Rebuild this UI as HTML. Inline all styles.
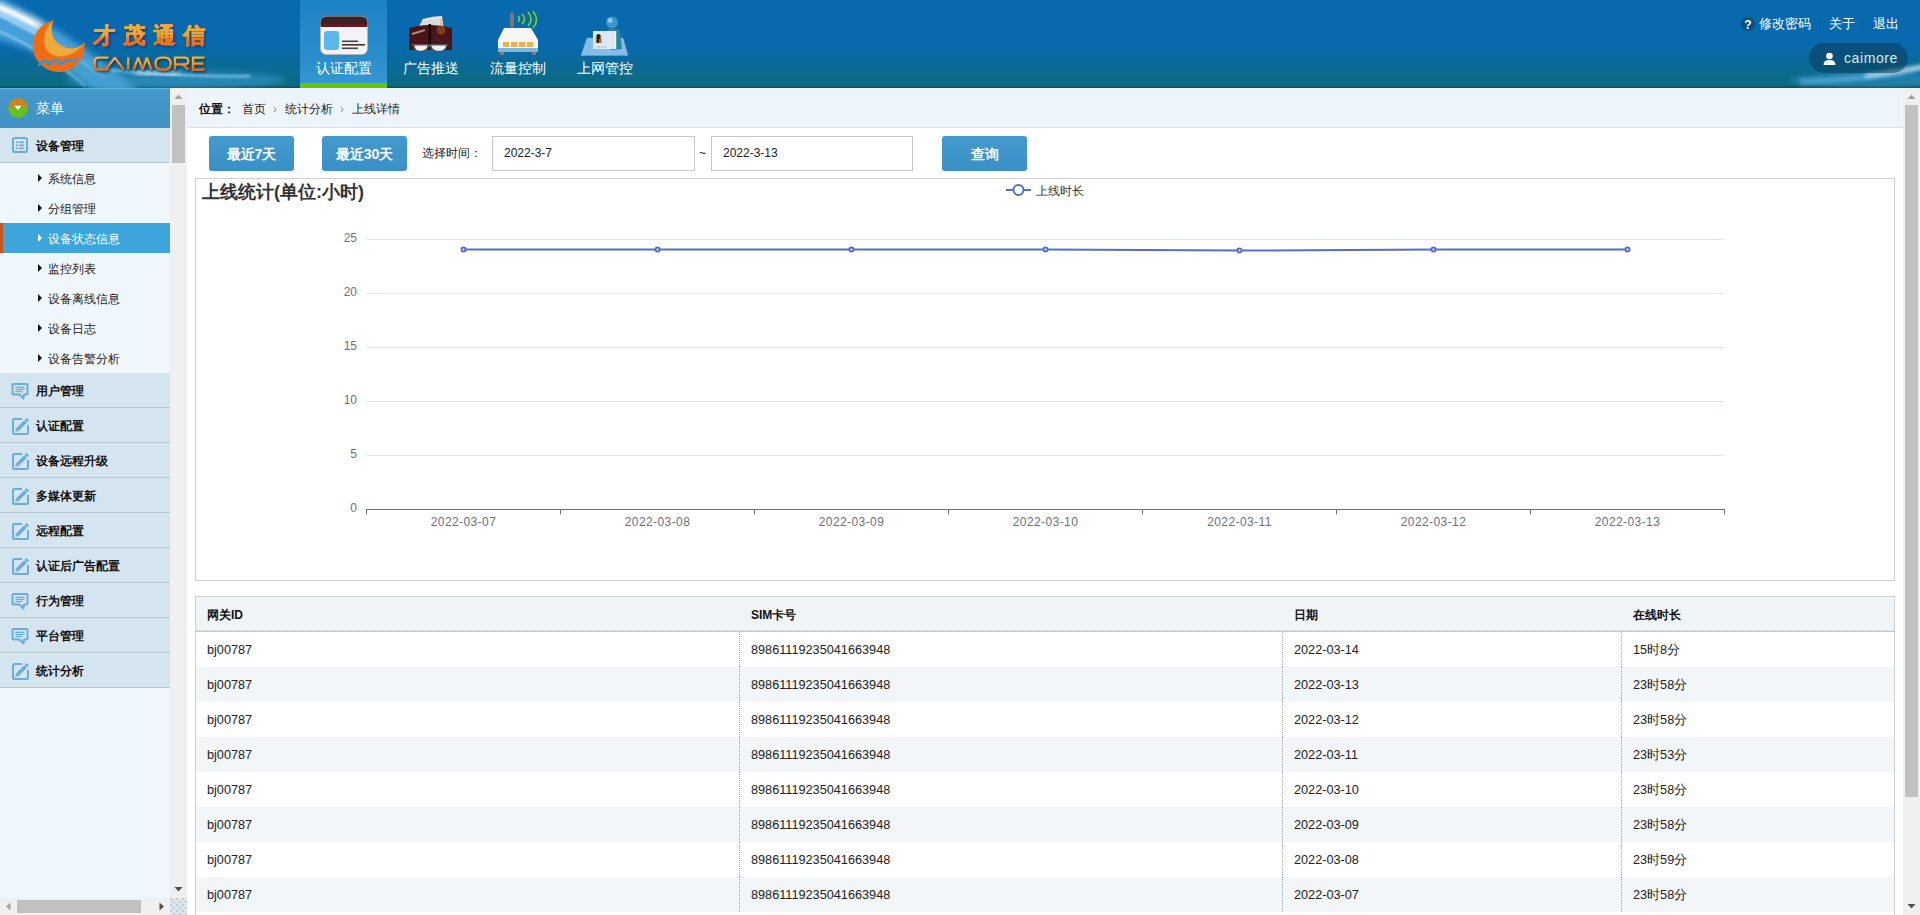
<!DOCTYPE html>
<html><head><meta charset="utf-8">
<style>
*{box-sizing:border-box;margin:0;padding:0}
html,body{width:1920px;height:915px;overflow:hidden;background:#fff;font-family:"Liberation Sans",sans-serif;font-size:12px;color:#222}
.abs{position:absolute}
#hdr{position:absolute;left:0;top:0;width:1920px;height:88px;background:linear-gradient(#0869ae 0,#0869ae 44px,#0a6a9a 62px,#0d6a80 86px,#0a4f66 87px,#0a4f66 88px);overflow:hidden}
.tab{position:absolute;top:0;width:87px;height:88px;text-align:center;color:#fff;font-size:14px}
.tab .lbl{position:absolute;left:0;width:87px;top:59px;line-height:18px}
.tab.act{background:linear-gradient(#1b82c4,#2a8fcc 70%,#3497d0 83px,#5ecc00 83px,#5ecc00 88px)}
#side{position:absolute;left:0;top:88px;width:170px;height:810px;background:#eff7fd;overflow:hidden}
.vsb{position:absolute;background:#f0f0f0}
.menuhd{position:absolute;left:0;top:0;width:170px;height:40px;background:linear-gradient(#56b6e8 0,#56b6e8 1px,#4698cb 1px,#3f91c6);color:#fff;font-size:14px}
.grp{position:absolute;left:0;width:170px;height:35px;background:#d5e5ef;border-bottom:1px solid #b5c9d6;font-weight:bold;color:#111}
.ico{position:absolute;left:11px;top:8px}
.grp span{position:absolute;left:36px;top:1px;line-height:34px}
.sub{position:absolute;left:0;width:170px;height:30px;color:#222}
.sub span{position:absolute;left:48px;line-height:30px;top:1px}
.sub i{position:absolute;left:38px;top:11px;width:0;height:0;border-top:4px solid transparent;border-bottom:4px solid transparent;border-left:4px solid #111}
.sub.act{background:#3ea5dc;color:#fff;border-left:3px solid #c9561e}
.sub.act i{border-left-color:#fff;left:35px}
.sub.act span{left:45px}
#main{position:absolute;left:187px;top:88px;width:1716px;height:827px;background:#fff;overflow:hidden}
#crumb{position:absolute;left:0;top:0;width:1716px;height:40px;background:#edf4fb;border-bottom:1px solid #d6e1ea}
.btn{position:absolute;top:48px;height:35px;border-radius:3px;background:linear-gradient(#449acb,#3a90c6);color:#fff;font-weight:bold;font-size:14px;text-align:center;line-height:37px}
.inp{position:absolute;top:48px;height:35px;border:1px solid #c8c8c8;background:#fff;line-height:33px;padding-left:11px;font-size:12px;color:#222}
#chart{position:absolute;left:8px;top:90px;width:1700px;height:403px;border:1px solid #cfcfcf;background:#fff}
#tbl{position:absolute;left:8px;top:508px;width:1700px;height:330px;border:1px solid #cfcfcf;border-bottom:none}
.th{position:absolute;top:0;left:0;width:1698px;height:35px;background:#eff4f7;border-bottom:1px solid #b9cdda;font-weight:bold;color:#111}
.th:after{content:"";position:absolute;left:0;right:0;bottom:0;border-bottom:1px dotted #c6d6e0}
.row{position:absolute;left:0;width:1698px;height:35px}
.row.odd{background:#f2f6f9}
.c{position:absolute;top:1px;line-height:35px;padding-left:11px;height:35px}
.cb{border-left:1px dotted #a8a8a8;padding-left:11px;top:0;line-height:37px}
.row .c{font-size:12.7px;color:#222}
</style></head><body>
<div id="hdr">
  <svg class="abs" style="left:0;top:0" width="420" height="88" viewBox="0 0 420 88">
    <defs>
      <filter id="bl3" x="-20%" y="-50%" width="140%" height="200%"><feGaussianBlur stdDeviation="3"/></filter>
      <filter id="bl1" x="-20%" y="-50%" width="140%" height="200%"><feGaussianBlur stdDeviation="1.2"/></filter>
      <filter id="sh" x="-10%" y="-10%" width="130%" height="140%"><feGaussianBlur stdDeviation="0.8"/></filter>
    </defs>
    <path d="M-10,2 L0,-2 C40,18 90,48 140,92 L95,92 C60,62 25,45 -10,38 Z" fill="#5fb6ea" opacity="0.7" filter="url(#bl3)"/>
    <path d="M-6,6 C10,12 25,19 42,28" stroke="#ffffff" stroke-width="9" fill="none" opacity="0.9" filter="url(#bl3)"/>
    <path d="M-4,6 C10,11 22,17 34,24" stroke="#ffffff" stroke-width="3" fill="none" opacity="0.9" filter="url(#bl1)"/>
    <path d="M-4,14 C20,24 45,38 70,52" stroke="#c8ecff" stroke-width="2" fill="none" opacity="0.8" filter="url(#bl1)"/>
    <path d="M-4,30 C25,42 55,60 85,86" stroke="#a6dcfa" stroke-width="2" fill="none" opacity="0.7" filter="url(#bl1)"/>
    <path d="M10,22 C40,36 70,52 105,78" stroke="#8fd0f5" stroke-width="1.5" fill="none" opacity="0.6" filter="url(#bl1)"/>
    <ellipse cx="175" cy="80" rx="110" ry="9" fill="#3f9fd8" opacity="0.55" filter="url(#bl3)"/>
    <path d="M110,70 C150,74 200,77 250,76" stroke="#8fd3f8" stroke-width="2.5" fill="none" opacity="0.7" filter="url(#bl1)"/>
    <path d="M135,72 C150,73 165,75 180,74" stroke="#ffffff" stroke-width="4" fill="none" opacity="0.75" filter="url(#bl3)"/>
    <!-- moon -->
    <path d="M53.4,20.5 A26,26 0 1 0 84.5,43 A19.5,19.5 0 0 1 53.4,20.5 Z" fill="#ef6c12"/>
    <path d="M53.4,20.5 C45,27 42,40 46,49 C51,58 70,62 84.5,43 A19.5,19.5 0 0 1 53.4,20.5 Z" fill="#eeaa3c"/>
    <path d="M53.4,20.5 C45,27 42,40 46,49 C51,58 70,62 84.5,43" fill="none" stroke="#d8902a" stroke-width="1.2" opacity="0.7"/>
    <path d="M39,65 C42,62 45,60 48,62 C49,65 47,66 50,64 C53,61 56,60 59,61 C60,64 58,66 61,64 C64,61 68,60 71,61 C73,62 74,60 77,59" stroke="#3a92d2" stroke-width="2.4" fill="none" stroke-linecap="round"/>
    <defs><linearGradient id="og" x1="0" y1="0" x2="0" y2="1"><stop offset="0" stop-color="#f4ae3c"/><stop offset="0.5" stop-color="#f0a030"/><stop offset="0.62" stop-color="#f07a1c"/><stop offset="1" stop-color="#f06a14"/></linearGradient></defs>
    <text x="94.5" y="44.5" font-size="22" font-weight="bold" fill="#073560" opacity="0.75" letter-spacing="8" filter="url(#sh)">才茂通信</text>
    <text x="92.5" y="43" font-size="22" font-weight="bold" fill="url(#og)" stroke="url(#og)" stroke-width="0.6" letter-spacing="8">才茂通信</text>
    <path d="M108.5,57.6 H98.8 Q94.6,57.6 94.6,61.8 V65.4 Q94.6,69.6 98.8,69.6 H108.5 M105.8,69.6 L114.8,57.6 L123.8,69.6 M128.3,57.6 V69.6 M133.7,69.6 L138.3,57.6 L142.6,69.6 L146.9,57.6 L151.4,69.6 M161.5,57.6 H164.8 Q170.7,57.6 170.7,63.6 Q170.7,69.6 164.8,69.6 H161.5 Q155.6,69.6 155.6,63.6 Q155.6,57.6 161.5,57.6 Z M175,69.6 V57.6 H184.3 Q188.3,57.6 188.3,61.1 Q188.3,64.5 184.3,64.5 H175 M182.5,64.5 L188.6,69.6 M204.6,57.6 H193.1 V69.6 H204.6 M193.1,63.6 H203.2" fill="none" stroke="#062f55" stroke-width="2.5" stroke-miterlimit="1.6" opacity="0.8" transform="translate(1.3,1.3)" filter="url(#sh)"/>
    <path d="M108.5,57.6 H98.8 Q94.6,57.6 94.6,61.8 V65.4 Q94.6,69.6 98.8,69.6 H108.5 M105.8,69.6 L114.8,57.6 L123.8,69.6 M128.3,57.6 V69.6 M133.7,69.6 L138.3,57.6 L142.6,69.6 L146.9,57.6 L151.4,69.6 M161.5,57.6 H164.8 Q170.7,57.6 170.7,63.6 Q170.7,69.6 164.8,69.6 H161.5 Q155.6,69.6 155.6,63.6 Q155.6,57.6 161.5,57.6 Z M175,69.6 V57.6 H184.3 Q188.3,57.6 188.3,61.1 Q188.3,64.5 184.3,64.5 H175 M182.5,64.5 L188.6,69.6 M204.6,57.6 H193.1 V69.6 H204.6 M193.1,63.6 H203.2" fill="none" stroke="url(#og2)" stroke-width="2.4" stroke-linejoin="miter" stroke-miterlimit="1.6"/>
    <defs><linearGradient id="og2" gradientUnits="userSpaceOnUse" x1="0" y1="56" x2="0" y2="71"><stop offset="0" stop-color="#f4ae3c"/><stop offset="0.5" stop-color="#f0a030"/><stop offset="0.65" stop-color="#f07a1c"/><stop offset="1" stop-color="#f06a14"/></linearGradient></defs>
  </svg>

  <svg class="abs" style="left:300px;top:0;z-index:2" width="348" height="60" viewBox="300 0 348 60">
    <!-- card -->
    <rect x="320.5" y="16.5" width="47" height="38" rx="6" fill="#e9e9ec" stroke="#b9b4b4"/>
    <path d="M320.5,26 V22.5 A6,6 0 0 1 326.5,16.5 H361.5 A6,6 0 0 1 367.5,22.5 V26 Z" fill="#3a2326"/>
    <rect x="321" y="24" width="46" height="3" fill="#6a1820"/>
    <rect x="321" y="27" width="46" height="27" rx="5" fill="#f3f3f5"/>
    <rect x="324" y="31" width="15" height="19" rx="3" fill="#5bb8ec"/>
    <rect x="342" y="40.5" width="16" height="1.6" fill="#444"/>
    <rect x="342" y="44" width="23" height="1.6" fill="#5a2a2a"/>
    <rect x="342" y="47.5" width="16" height="1.6" fill="#444"/>
    <!-- book -->
    <path d="M419,26 L423,19 C430,17 436,16 442,16 L443.5,27 Z" fill="#dadada"/>
    <path d="M422,20 L442,17" stroke="#f0f0f0" stroke-width="1"/>
    <circle cx="441" cy="20" r="1" fill="#f0b050"/><circle cx="441" cy="23.5" r="1" fill="#f0b050"/>
    <path d="M409,28 C416,26 423,25 429.5,25 C436,25 444,26 452,28 L452,50 L409,50 Z" fill="#4a1418"/>
    <rect x="428.5" y="24" width="2.6" height="24" fill="#140707"/>
    <path d="M412,34 L425,30" stroke="#8a8a8a" stroke-width="2"/>
    <path d="M413,33.6 L424,30.4" stroke="#e0a030" stroke-width="1" stroke-dasharray="2 1.5"/>
    <circle cx="441" cy="30" r="4.5" fill="#9a4a20" opacity="0.75"/>
    <path d="M436,37 L444,45" stroke="#6a4040" stroke-width="1" stroke-dasharray="1 1.5"/>
    <path d="M411,44 H449 L447,46 C446,51 440,52 434,52 C431,50 430.5,47 429.5,47 C428.5,47 428,50 425,52 C419,52 413,51 413,46 Z" fill="#555"/>
    <path d="M414.5,45.5 H427.5 C427,49 424,50.8 420,50.8 C416.5,50.8 415,49 414.5,45.5 Z" fill="#eef2f5"/>
    <path d="M431.5,45.5 H446 C445.5,49 443,50.8 439,50.8 C435,50.8 432,49 431.5,45.5 Z" fill="#eef2f5"/>
    <!-- router -->
    <rect x="510" y="12.5" width="4" height="15" rx="1.5" fill="#777"/>
    <path d="M518,16 q3,3 0,6 M522,14 q5,5 0,10 M528,12 q6,7 0,14 M533,11 q7,9 0,17" stroke="#7ed321" stroke-width="1.6" fill="none"/>
    <path d="M504,28 L531,28 L538,40 L538,52 L498,52 L498,40 Z" fill="#f4f6f8"/>
    <rect x="503" y="42" width="6" height="5" fill="#f0b050"/><rect x="511" y="42" width="6" height="5" fill="#f0b050"/><rect x="519" y="42" width="6" height="5" fill="#f0b050"/><rect x="527" y="42" width="6" height="5" fill="#f0b050"/>
    <rect x="498" y="48" width="40" height="4" fill="#7ab8dc"/>
    <rect x="500" y="52" width="4" height="3" fill="#a07060"/><rect x="532" y="52" width="4" height="3" fill="#a07060"/>
    <!-- person -->
    <path d="M587,38 L623,38 L628,55.5 L581,55.5 Z" fill="#86bde6"/>
    <path d="M587,38 L623,38 L628,55.5 L581,55.5 Z" fill="none" stroke="#a0a8e8" stroke-width="0.8" stroke-dasharray="1 1.2" opacity="0.8"/>
    <path d="M607,30 Q613,27 620,30 L622,49 L611,50 Z" fill="#2a84a0"/>
    <circle cx="612" cy="22.5" r="6" fill="#3a98c8"/>
    <circle cx="610" cy="20.5" r="2.5" fill="#9ad4f0" opacity="0.8"/>
    <rect x="593" y="31" width="22" height="18" fill="#dde9f2"/>
    <rect x="615" y="31" width="1.2" height="18" fill="#f8f8f8"/>
    <rect x="595" y="35" width="6.5" height="8" fill="#f0c890"/>
    <path d="M596.5,37 a2.2,2.2 0 1 1 4,0 L600.5,43 H596.5 Z" fill="#222"/>
    <rect x="599" y="39" width="2.5" height="4" fill="#d8601a"/>
    <path d="M597,47 H607" stroke="#55cc22" stroke-width="1" stroke-dasharray="1 1"/>
    </svg>
  <div class="tab act" style="left:300px"><div class="lbl">认证配置</div></div>
  <div class="tab" style="left:387px"><div class="lbl">广告推送</div></div>
  <div class="tab" style="left:474px"><div class="lbl">流量控制</div></div>
  <div class="tab" style="left:561px"><div class="lbl">上网管控</div></div>
  <svg class="abs" style="left:1741px;top:17px" width="14" height="14" viewBox="0 0 14 14"><circle cx="7" cy="7" r="7" fill="#0c4f7a"/><text x="7" y="11.5" text-anchor="middle" font-size="12" font-weight="bold" fill="#fff">?</text></svg>
  <div class="abs" style="left:1759px;top:15px;font-size:13px;color:#fff;line-height:18px">修改密码</div>
  <div class="abs" style="left:1819px;top:19px;width:0;height:11px;border-left:1px dotted #7a3030"></div>
  <div class="abs" style="left:1829px;top:15px;font-size:13px;color:#fff;line-height:18px">关于</div>
  <div class="abs" style="left:1863px;top:19px;width:0;height:11px;border-left:1px dotted #7a3030"></div>
  <div class="abs" style="left:1873px;top:15px;font-size:13px;color:#fff;line-height:18px">退出</div>
  <svg class="abs" style="left:1700px;top:40px" width="220" height="48" viewBox="1700 40 220 48"><defs><filter id="bl2" x="-20%" y="-100%" width="140%" height="300%"><feGaussianBlur stdDeviation="2"/></filter></defs>
    <ellipse cx="1875" cy="80" rx="85" ry="7" fill="#3a9ad0" opacity="0.45" filter="url(#bl2)"/>
    <path d="M1800,82 C1850,80 1890,75 1925,66" stroke="#6fc0f0" stroke-width="5" fill="none" opacity="0.6" filter="url(#bl2)"/>
    <path d="M1865,76 C1885,74 1900,71 1925,67" stroke="#ffffff" stroke-width="3" fill="none" opacity="0.85" filter="url(#bl2)"/>
  </svg>
  <div class="abs" style="left:1809px;top:43px;width:99px;height:30px;border-radius:15px;background:rgba(10,60,90,0.55)"></div>
  <svg class="abs" style="left:1823px;top:52px" width="14" height="14" viewBox="0 0 14 14"><circle cx="6.5" cy="4" r="3.3" fill="#fff"/><path d="M0.5,13 Q0.5,8 6.5,8 Q12.5,8 12.5,13 Z" fill="#fff"/></svg>
  <div class="abs" style="left:1844px;top:49px;font-size:14px;letter-spacing:0.6px;color:#dfe7ec;line-height:18px">caimore</div>
</div>
<div id="side">
  <div class="menuhd"><svg class="abs" style="left:8px;top:10px" width="20" height="20" viewBox="0 0 20 20"><defs><clipPath id="cc"><circle cx="10" cy="10" r="9.8"/></clipPath></defs><g clip-path="url(#cc)"><rect x="0" y="0" width="20" height="20" fill="#c8861e"/><rect x="0" y="10" width="20" height="12" fill="#62c21e"/><path d="M0,11 L20,11 L20,12 L0,12Z" fill="#8fb020" opacity=".6"/></g><path d="M6.3,7.8 H13.7 L10,12 Z" fill="#fff"/></svg><span style="position:absolute;left:36px;line-height:40px">菜单</span></div>
  <div class="grp" style="top:40px"><svg class="ico" width="18" height="18" viewBox="0 0 18 18"><rect x="2" y="2" width="14" height="14" rx="1.5" fill="none" stroke="#6aaed6" stroke-width="2"/><rect x="5" y="5.5" width="2" height="1.6" fill="#6aaed6"/><rect x="8" y="5.5" width="5" height="1.6" fill="#6aaed6"/><rect x="5" y="8.5" width="2" height="1.6" fill="#6aaed6"/><rect x="8" y="8.5" width="5" height="1.6" fill="#6aaed6"/><rect x="5" y="11.5" width="2" height="1.6" fill="#6aaed6"/><rect x="8" y="11.5" width="5" height="1.6" fill="#6aaed6"/></svg><span>设备管理</span></div>
  <div class="sub" style="top:75px"><i></i><span>系统信息</span></div>
  <div class="sub" style="top:105px"><i></i><span>分组管理</span></div>
  <div class="sub act" style="top:135px"><i></i><span>设备状态信息</span></div>
  <div class="sub" style="top:165px"><i></i><span>监控列表</span></div>
  <div class="sub" style="top:195px"><i></i><span>设备离线信息</span></div>
  <div class="sub" style="top:225px"><i></i><span>设备日志</span></div>
  <div class="sub" style="top:255px"><i></i><span>设备告警分析</span></div>
  <div class="grp" style="top:285px"><svg class="ico" width="18" height="19" viewBox="0 0 18 19"><path d="M2.5,3 H15.5 A1,1 0 0 1 16.5,4 V12.5 A1,1 0 0 1 15.5,13.5 H13 L12.5,17.5 L8.5,13.5 H2.5 A1,1 0 0 1 1.5,12.5 V4 A1,1 0 0 1 2.5,3 Z" fill="none" stroke="#6aaed6" stroke-width="2" stroke-linejoin="round"/><rect x="4.5" y="5.7" width="9" height="1.3" fill="#6aaed6"/><rect x="4.5" y="7.8" width="9" height="1.3" fill="#6aaed6"/><rect x="4.5" y="9.9" width="7" height="1.3" fill="#6aaed6"/></svg><span>用户管理</span></div>
  <div class="grp" style="top:320px"><svg class="ico" width="18" height="19" viewBox="0 0 18 19"><path d="M11,3 H3.5 A1.5,1.5 0 0 0 2,4.5 V16.5 A1.5,1.5 0 0 0 3.5,18 H15.5 A1.5,1.5 0 0 0 17,16.5 V9" fill="none" stroke="#6aaed6" stroke-width="2"/><g transform="rotate(-45 11 9)"><rect x="4" y="7.2" width="12" height="3.6" fill="#6aaed6"/><path d="M4,7.2 L1.5,9 L4,10.8 Z" fill="#6aaed6"/><rect x="16.6" y="7.2" width="2.6" height="3.6" fill="#6aaed6"/></g></svg><span>认证配置</span></div>
  <div class="grp" style="top:355px"><svg class="ico" width="18" height="19" viewBox="0 0 18 19"><path d="M11,3 H3.5 A1.5,1.5 0 0 0 2,4.5 V16.5 A1.5,1.5 0 0 0 3.5,18 H15.5 A1.5,1.5 0 0 0 17,16.5 V9" fill="none" stroke="#6aaed6" stroke-width="2"/><g transform="rotate(-45 11 9)"><rect x="4" y="7.2" width="12" height="3.6" fill="#6aaed6"/><path d="M4,7.2 L1.5,9 L4,10.8 Z" fill="#6aaed6"/><rect x="16.6" y="7.2" width="2.6" height="3.6" fill="#6aaed6"/></g></svg><span>设备远程升级</span></div>
  <div class="grp" style="top:390px"><svg class="ico" width="18" height="19" viewBox="0 0 18 19"><path d="M11,3 H3.5 A1.5,1.5 0 0 0 2,4.5 V16.5 A1.5,1.5 0 0 0 3.5,18 H15.5 A1.5,1.5 0 0 0 17,16.5 V9" fill="none" stroke="#6aaed6" stroke-width="2"/><g transform="rotate(-45 11 9)"><rect x="4" y="7.2" width="12" height="3.6" fill="#6aaed6"/><path d="M4,7.2 L1.5,9 L4,10.8 Z" fill="#6aaed6"/><rect x="16.6" y="7.2" width="2.6" height="3.6" fill="#6aaed6"/></g></svg><span>多媒体更新</span></div>
  <div class="grp" style="top:425px"><svg class="ico" width="18" height="19" viewBox="0 0 18 19"><path d="M11,3 H3.5 A1.5,1.5 0 0 0 2,4.5 V16.5 A1.5,1.5 0 0 0 3.5,18 H15.5 A1.5,1.5 0 0 0 17,16.5 V9" fill="none" stroke="#6aaed6" stroke-width="2"/><g transform="rotate(-45 11 9)"><rect x="4" y="7.2" width="12" height="3.6" fill="#6aaed6"/><path d="M4,7.2 L1.5,9 L4,10.8 Z" fill="#6aaed6"/><rect x="16.6" y="7.2" width="2.6" height="3.6" fill="#6aaed6"/></g></svg><span>远程配置</span></div>
  <div class="grp" style="top:460px"><svg class="ico" width="18" height="19" viewBox="0 0 18 19"><path d="M11,3 H3.5 A1.5,1.5 0 0 0 2,4.5 V16.5 A1.5,1.5 0 0 0 3.5,18 H15.5 A1.5,1.5 0 0 0 17,16.5 V9" fill="none" stroke="#6aaed6" stroke-width="2"/><g transform="rotate(-45 11 9)"><rect x="4" y="7.2" width="12" height="3.6" fill="#6aaed6"/><path d="M4,7.2 L1.5,9 L4,10.8 Z" fill="#6aaed6"/><rect x="16.6" y="7.2" width="2.6" height="3.6" fill="#6aaed6"/></g></svg><span>认证后广告配置</span></div>
  <div class="grp" style="top:495px"><svg class="ico" width="18" height="19" viewBox="0 0 18 19"><path d="M2.5,3 H15.5 A1,1 0 0 1 16.5,4 V12.5 A1,1 0 0 1 15.5,13.5 H13 L12.5,17.5 L8.5,13.5 H2.5 A1,1 0 0 1 1.5,12.5 V4 A1,1 0 0 1 2.5,3 Z" fill="none" stroke="#6aaed6" stroke-width="2" stroke-linejoin="round"/><rect x="4.5" y="5.7" width="9" height="1.3" fill="#6aaed6"/><rect x="4.5" y="7.8" width="9" height="1.3" fill="#6aaed6"/><rect x="4.5" y="9.9" width="7" height="1.3" fill="#6aaed6"/></svg><span>行为管理</span></div>
  <div class="grp" style="top:530px"><svg class="ico" width="18" height="19" viewBox="0 0 18 19"><path d="M2.5,3 H15.5 A1,1 0 0 1 16.5,4 V12.5 A1,1 0 0 1 15.5,13.5 H13 L12.5,17.5 L8.5,13.5 H2.5 A1,1 0 0 1 1.5,12.5 V4 A1,1 0 0 1 2.5,3 Z" fill="none" stroke="#6aaed6" stroke-width="2" stroke-linejoin="round"/><rect x="4.5" y="5.7" width="9" height="1.3" fill="#6aaed6"/><rect x="4.5" y="7.8" width="9" height="1.3" fill="#6aaed6"/><rect x="4.5" y="9.9" width="7" height="1.3" fill="#6aaed6"/></svg><span>平台管理</span></div>
  <div class="grp" style="top:565px"><svg class="ico" width="18" height="19" viewBox="0 0 18 19"><path d="M11,3 H3.5 A1.5,1.5 0 0 0 2,4.5 V16.5 A1.5,1.5 0 0 0 3.5,18 H15.5 A1.5,1.5 0 0 0 17,16.5 V9" fill="none" stroke="#6aaed6" stroke-width="2"/><g transform="rotate(-45 11 9)"><rect x="4" y="7.2" width="12" height="3.6" fill="#6aaed6"/><path d="M4,7.2 L1.5,9 L4,10.8 Z" fill="#6aaed6"/><rect x="16.6" y="7.2" width="2.6" height="3.6" fill="#6aaed6"/></g></svg><span>统计分析</span></div>
</div>
<div class="vsb" style="left:170px;top:88px;width:17px;height:810px"><div class="abs" style="left:2px;top:17px;width:13px;height:58px;background:#c1c1c1"></div>
<svg class="abs" style="left:0;top:0" width="17" height="17"><path d="M4.5,11 L8.5,6.5 L12.5,11 Z" fill="#a3a3a3"/></svg>
<svg class="abs" style="left:0;top:793px" width="17" height="17"><path d="M4.5,6 L8.5,10.5 L12.5,6 Z" fill="#505050"/></svg></div>
<div class="vsb" style="left:0;top:898px;width:170px;height:17px"><div class="abs" style="left:17px;top:2px;width:124px;height:13px;background:#c1c1c1"></div>
<svg class="abs" style="left:0;top:0" width="17" height="17"><path d="M10.5,4.5 L6,8.5 L10.5,12.5 Z" fill="#a3a3a3"/></svg>
<svg class="abs" style="left:153px;top:0" width="17" height="17"><path d="M6.5,4.5 L11,8.5 L6.5,12.5 Z" fill="#505050"/></svg></div>
<div class="vsb" style="left:170px;top:898px;width:17px;height:17px;background-color:#dde5ec;background-image:radial-gradient(circle,#c3ccd3 0.7px,transparent 1px),radial-gradient(circle,#c3ccd3 0.7px,transparent 1px);background-size:6px 6px,6px 6px;background-position:1px 1px,4px 4px"></div>
<div id="main">
  <div id="crumb">
<span class="abs" style="left:12px;top:1px;line-height:40px;font-weight:bold;color:#111">位置：</span>
<span class="abs" style="left:55px;top:1px;line-height:40px">首页</span>
<span class="abs" style="left:86px;top:1px;line-height:40px;color:#999">›</span>
<span class="abs" style="left:98px;top:1px;line-height:40px">统计分析</span>
<span class="abs" style="left:153px;top:1px;line-height:40px;color:#999">›</span>
<span class="abs" style="left:165px;top:1px;line-height:40px">上线详情</span>
</div>
  <div class="btn" style="left:22px;width:85px">最近7天</div>
  <div class="btn" style="left:135px;width:85px">最近30天</div>
  <div class="abs" style="left:235px;top:48px;line-height:35px">选择时间：</div>
  <div class="inp" style="left:305px;width:203px">2022-3-7</div>
  <div class="abs" style="left:512px;top:48px;line-height:35px">~</div>
  <div class="inp" style="left:524px;width:202px">2022-3-13</div>
  <div class="btn" style="left:755px;width:85px">查询</div>
  <div id="chart"></div>
  <div id="tbl">
<div class="th"><div class="c" style="left:0">网关ID</div><div class="c" style="left:544px">SIM卡号</div><div class="c" style="left:1087px">日期</div><div class="c" style="left:1426px">在线时长</div></div>
<div class="row" style="top:35px"><div class="c" style="left:0">bj00787</div><div class="c cb" style="left:543px">89861119235041663948</div><div class="c cb" style="left:1086px">2022-03-14</div><div class="c cb" style="left:1425px">15时8分</div></div>
<div class="row odd" style="top:70px"><div class="c" style="left:0">bj00787</div><div class="c cb" style="left:543px">89861119235041663948</div><div class="c cb" style="left:1086px">2022-03-13</div><div class="c cb" style="left:1425px">23时58分</div></div>
<div class="row" style="top:105px"><div class="c" style="left:0">bj00787</div><div class="c cb" style="left:543px">89861119235041663948</div><div class="c cb" style="left:1086px">2022-03-12</div><div class="c cb" style="left:1425px">23时58分</div></div>
<div class="row odd" style="top:140px"><div class="c" style="left:0">bj00787</div><div class="c cb" style="left:543px">89861119235041663948</div><div class="c cb" style="left:1086px">2022-03-11</div><div class="c cb" style="left:1425px">23时53分</div></div>
<div class="row" style="top:175px"><div class="c" style="left:0">bj00787</div><div class="c cb" style="left:543px">89861119235041663948</div><div class="c cb" style="left:1086px">2022-03-10</div><div class="c cb" style="left:1425px">23时58分</div></div>
<div class="row odd" style="top:210px"><div class="c" style="left:0">bj00787</div><div class="c cb" style="left:543px">89861119235041663948</div><div class="c cb" style="left:1086px">2022-03-09</div><div class="c cb" style="left:1425px">23时58分</div></div>
<div class="row" style="top:245px"><div class="c" style="left:0">bj00787</div><div class="c cb" style="left:543px">89861119235041663948</div><div class="c cb" style="left:1086px">2022-03-08</div><div class="c cb" style="left:1425px">23时59分</div></div>
<div class="row odd" style="top:280px"><div class="c" style="left:0">bj00787</div><div class="c cb" style="left:543px">89861119235041663948</div><div class="c cb" style="left:1086px">2022-03-07</div><div class="c cb" style="left:1425px">23时58分</div></div>
</div>
</div>
<!--CHART-->
<svg class="abs" style="left:0;top:0" width="1920" height="915" viewBox="0 0 1920 915">
<text x="202" y="198" font-size="18" font-weight="bold" fill="#333">上线统计(单位:小时)</text>
<line x1="366.5" x2="1724.5" y1="455.5" y2="455.5" stroke="#e0e6f1" stroke-width="1"/>
<line x1="366.5" x2="1724.5" y1="401.5" y2="401.5" stroke="#e0e6f1" stroke-width="1"/>
<line x1="366.5" x2="1724.5" y1="347.5" y2="347.5" stroke="#e0e6f1" stroke-width="1"/>
<line x1="366.5" x2="1724.5" y1="293.5" y2="293.5" stroke="#e0e6f1" stroke-width="1"/>
<line x1="366.5" x2="1724.5" y1="239.5" y2="239.5" stroke="#e0e6f1" stroke-width="1"/>
<text x="357" y="512.0" text-anchor="end" font-size="12" fill="#6e7079">0</text>
<text x="357" y="458.0" text-anchor="end" font-size="12" fill="#6e7079">5</text>
<text x="357" y="404.0" text-anchor="end" font-size="12" fill="#6e7079">10</text>
<text x="357" y="350.0" text-anchor="end" font-size="12" fill="#6e7079">15</text>
<text x="357" y="296.0" text-anchor="end" font-size="12" fill="#6e7079">20</text>
<text x="357" y="242.0" text-anchor="end" font-size="12" fill="#6e7079">25</text>
<line x1="366" x2="1725" y1="509.5" y2="509.5" stroke="#6e7079" stroke-width="1"/>
<line x1="366.5" x2="366.5" y1="509.5" y2="514.5" stroke="#6e7079" stroke-width="1"/>
<line x1="560.5" x2="560.5" y1="509.5" y2="514.5" stroke="#6e7079" stroke-width="1"/>
<line x1="754.5" x2="754.5" y1="509.5" y2="514.5" stroke="#6e7079" stroke-width="1"/>
<line x1="948.5" x2="948.5" y1="509.5" y2="514.5" stroke="#6e7079" stroke-width="1"/>
<line x1="1142.5" x2="1142.5" y1="509.5" y2="514.5" stroke="#6e7079" stroke-width="1"/>
<line x1="1336.5" x2="1336.5" y1="509.5" y2="514.5" stroke="#6e7079" stroke-width="1"/>
<line x1="1530.5" x2="1530.5" y1="509.5" y2="514.5" stroke="#6e7079" stroke-width="1"/>
<line x1="1724.5" x2="1724.5" y1="509.5" y2="514.5" stroke="#6e7079" stroke-width="1"/>
<text x="463.5" y="526" text-anchor="middle" font-size="12" letter-spacing="0.42" fill="#6e7079">2022-03-07</text>
<text x="657.5" y="526" text-anchor="middle" font-size="12" letter-spacing="0.42" fill="#6e7079">2022-03-08</text>
<text x="851.5" y="526" text-anchor="middle" font-size="12" letter-spacing="0.42" fill="#6e7079">2022-03-09</text>
<text x="1045.5" y="526" text-anchor="middle" font-size="12" letter-spacing="0.42" fill="#6e7079">2022-03-10</text>
<text x="1239.5" y="526" text-anchor="middle" font-size="12" letter-spacing="0.42" fill="#6e7079">2022-03-11</text>
<text x="1433.5" y="526" text-anchor="middle" font-size="12" letter-spacing="0.42" fill="#6e7079">2022-03-12</text>
<text x="1627.5" y="526" text-anchor="middle" font-size="12" letter-spacing="0.42" fill="#6e7079">2022-03-13</text>
<polyline fill="none" stroke="#5470c6" stroke-width="2" points="463.5,249.6 657.5,249.5 851.5,249.6 1045.5,249.6 1239.5,250.6 1433.5,249.6 1627.5,249.6"/>
<circle cx="463.5" cy="249.6" r="2" fill="#fff" stroke="#5470c6" stroke-width="2"/>
<circle cx="657.5" cy="249.5" r="2" fill="#fff" stroke="#5470c6" stroke-width="2"/>
<circle cx="851.5" cy="249.6" r="2" fill="#fff" stroke="#5470c6" stroke-width="2"/>
<circle cx="1045.5" cy="249.6" r="2" fill="#fff" stroke="#5470c6" stroke-width="2"/>
<circle cx="1239.5" cy="250.6" r="2" fill="#fff" stroke="#5470c6" stroke-width="2"/>
<circle cx="1433.5" cy="249.6" r="2" fill="#fff" stroke="#5470c6" stroke-width="2"/>
<circle cx="1627.5" cy="249.6" r="2" fill="#fff" stroke="#5470c6" stroke-width="2"/>
<line x1="1006" x2="1031" y1="190" y2="190" stroke="#5470c6" stroke-width="2"/>
<circle cx="1018.5" cy="190" r="5" fill="#fff" stroke="#5470c6" stroke-width="2"/>
<text x="1036" y="194.5" font-size="12" fill="#333">上线时长</text>
</svg>
<div class="vsb" style="left:1903px;top:88px;width:17px;height:827px"><div class="abs" style="left:2px;top:17px;width:13px;height:692px;background:#c1c1c1"></div>
<svg class="abs" style="left:0;top:0" width="17" height="17"><path d="M4.5,11 L8.5,6.5 L12.5,11 Z" fill="#a3a3a3"/></svg>
<svg class="abs" style="left:0;top:810px" width="17" height="17"><path d="M4.5,6 L8.5,10.5 L12.5,6 Z" fill="#505050"/></svg></div>
</body></html>
